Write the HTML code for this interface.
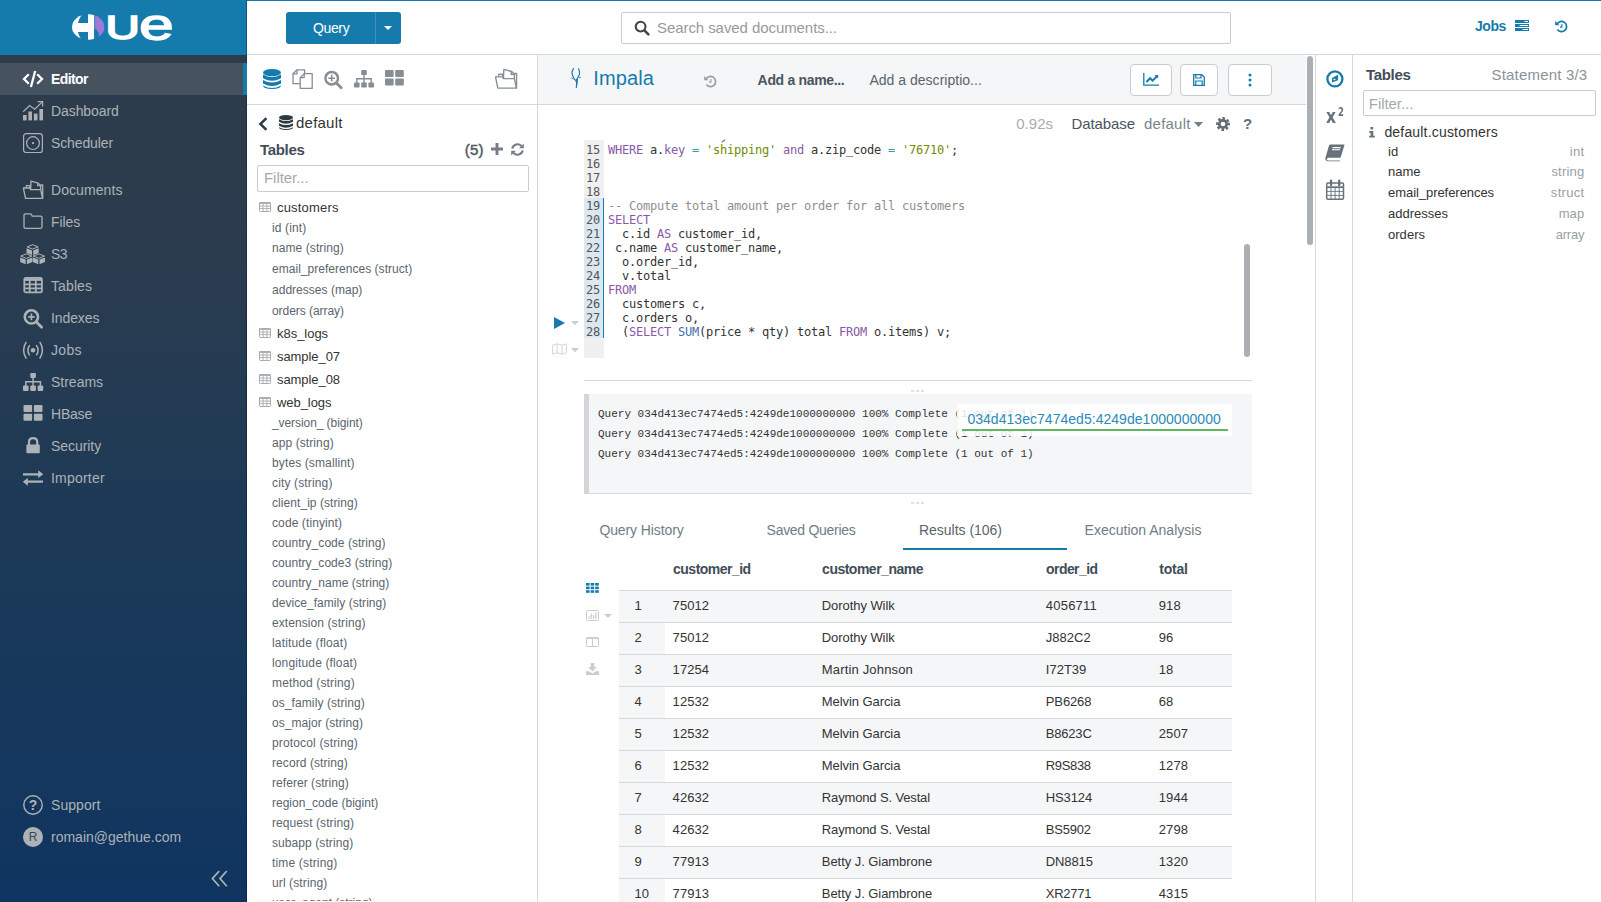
<!DOCTYPE html>
<html lang="en"><head>
<meta charset="utf-8">
<title>Hue - Editor</title>
<style>
*{box-sizing:border-box}
html,body{margin:0;padding:0}
body{width:1601px;height:902px;overflow:hidden;background:#fff;position:relative;font-family:"Liberation Sans",sans-serif;font-size:14px;color:#333;line-height:20px}
.abs{position:absolute}
.t{white-space:pre;display:inline-block}
svg{display:block;position:absolute;overflow:visible}
/* ---------- sidebar ---------- */
#sb{position:absolute;left:0;top:0;width:247px;height:902px;background:linear-gradient(180deg,#2e3c4a 0px,#2b3c4e 250px,#1d3a57 520px,#0f3560 902px)}
#sbh{position:absolute;left:0;top:0;width:247px;height:55px;background:#157bad}
.si{position:absolute;left:0;width:247px;height:32px;color:#adb2b6;font-size:14px;line-height:32px}
.si .t{position:absolute;left:51px;top:0}
.si.on{background:#465260;color:#fff;font-weight:bold;border-right:4px solid #157bad}
.si svg{left:22px;top:5px;width:22px;height:22px}
/* ---------- top nav ---------- */
#top{position:absolute;left:247px;top:0;width:1354px;height:55px;background:#fff;border-top:1px solid #157bad;border-bottom:1px solid #d6d8db}
/* ---------- left assist ---------- */
#la{position:absolute;left:247px;top:55px;width:291px;height:847px;background:#fff;border-right:1px solid #d6d8db;overflow:hidden}
.col{position:absolute;left:25px;font-size:12px;color:#5a656d;line-height:20px;height:20px}
.tb{position:absolute;left:30px;font-size:13px;color:#333;line-height:20px;height:20px}
/* ---------- main ---------- */
#main{position:absolute;left:538px;top:55px;width:777px;height:847px;background:#fff;overflow:hidden}
.cm{font-family:"DejaVu Sans Mono","Liberation Mono",monospace;font-size:12px;line-height:14px;height:14px;letter-spacing:-0.225px;white-space:pre}
.lg{font-family:"Liberation Mono",monospace;font-size:11px;line-height:20px;height:20px;color:#333;white-space:pre}
/* ---------- right ---------- */
#rs{position:absolute;left:1315px;top:55px;width:38px;height:847px;border-left:1px solid #d6d8db;border-right:1px solid #d6d8db;background:#fff}
#ra{position:absolute;left:1353px;top:55px;width:248px;height:847px;background:#fff}
</style>
</head>
<body>
<!-- ================= SIDEBAR ================= -->
<div id="sb">
<div id="sbh"></div><div class="abs" style="left:246px;top:0;width:1px;height:902px;background:rgba(0,22,56,0.4)"></div>
<svg style="left:0;top:0;width:247px;height:55px" viewBox="0 0 247 55">
 <defs><mask id="hm" maskUnits="userSpaceOnUse" x="60" y="5" width="60" height="45"><ellipse cx="88.2" cy="27" rx="16.2" ry="12.8" fill="#fff"></ellipse><path d="M83.6 12 L88 12 L88 22.9 L77.8 22.9 Q79.4 17.6 83.6 12 Z" fill="#000"></path><path d="M77.8 31.9 L88 31.9 L88 42 L83 42 Q79 36.5 77.8 31.9 Z" fill="#000"></path><path d="M94.3 28.6 Q98.4 30.4 98.8 34.6 Q98.9 37.6 97 41 L94.3 41 Z" fill="#000"></path><rect x="94.3" y="10" width="0.8" height="34" fill="#000"></rect></mask></defs>
 <g mask="url(#hm)">
  <rect x="70" y="10" width="24.7" height="34" fill="#fff"></rect>
  <rect x="94.7" y="10" width="12" height="34" fill="#9f79d8"></rect>
  <circle cx="97.3" cy="21.6" r="0.7" fill="#5f8fd0"></circle>
 </g>
 <text transform="translate(105.6,39.4) scale(1.42,1)" font-family="Liberation Sans, sans-serif" font-size="33.5" fill="#fff" stroke="#fff" stroke-width="1.6">U</text>
 <text transform="translate(139,39.7) scale(1.39,1)" font-family="Liberation Sans, sans-serif" font-size="45" fill="#fff" stroke="#fff" stroke-width="1.3">e</text>
</svg>
<div class="si on" style="top:63px"><svg viewBox="0 0 22 22" fill="none" stroke="#fff" stroke-width="2.3" stroke-linecap="butt" stroke-linejoin="miter"><path d="M6.8 6.2 L2 11 L6.8 15.8"></path><path d="M13.2 3 L8.9 19"></path><path d="M15.2 6.2 L20 11 L15.2 15.8"></path></svg><span class="t" style="letter-spacing: -0.589px;">Editor</span></div>
<div class="si" style="top:95px"><svg viewBox="0 0 22 22" fill="#adb2b6"><rect x="1" y="15" width="3.6" height="5.4"></rect><rect x="6.4" y="11.5" width="3.6" height="8.9"></rect><rect x="11.9" y="13.6" width="3.6" height="6.8"></rect><rect x="17.4" y="9" width="3.6" height="11.4"></rect><path d="M1.2 11.8 L7.6 5.6 L12.8 9.2 L20.3 1.9" fill="none" stroke="#adb2b6" stroke-width="1.2"></path><path d="M15.6 1.6 L20.7 1.5 L20.6 6.6" fill="none" stroke="#adb2b6" stroke-width="1.2"></path></svg><span class="t" style="letter-spacing: -0.087px;">Dashboard</span></div>
<div class="si" style="top:127px"><svg viewBox="0 0 22 22" fill="none" stroke="#adb2b6" stroke-width="1.2"><rect x="1.6" y="1.7" width="18.8" height="18.8" rx="2.6"></rect><circle cx="11" cy="11.1" r="6.4"></circle><circle cx="11" cy="11.1" r="1.2" fill="#adb2b6" stroke="none"></circle></svg><span class="t" style="letter-spacing: -0.12px;">Scheduler</span></div>

<div class="si" style="top:174px"><svg viewBox="0 0 22 22" fill="none" stroke="#adb2b6" stroke-width="1.3" stroke-linejoin="round"><path d="M1.4 9 L8 9 L8.5 10.7 L18.7 10.7 L20.5 19.4 L3.5 19.4 Z"></path><path d="M20.7 19.4 V6 H18.6"></path><path d="M4 8.8 L4.4 6.6 H7.6 L8 8.8"></path><path d="M8.7 10.4 L9 2.2 L16.2 4.1 L18.7 6.7 V10.4"></path><path d="M16.2 4.1 L15.6 6.6 L18.5 6.9"></path></svg><span class="t" style="letter-spacing: 0.073px;">Documents</span></div>
<div class="si" style="top:206px"><svg viewBox="0 0 22 22" fill="none" stroke="#adb2b6" stroke-width="1.3" stroke-linejoin="round"><path d="M3.4 2.9 L8.2 2.9 Q9.2 2.9 9.6 3.8 L10.2 5.2 L18.6 5.2 Q20 5.2 20 6.6 L20 15.8 Q20 17.3 18.6 17.3 L3.4 17.3 Q2 17.3 2 15.8 L2 4.4 Q2 2.9 3.4 2.9 Z"></path></svg><span class="t" style="letter-spacing: -0.072px;">Files</span></div>
<div class="si" style="top:238px"><svg viewBox="0 0 22 22" fill="#adb2b6"><defs><g id="cube"><path d="M0.5 2.7 L6.1 0.5 L11.7 2.7 L6.1 4.9 Z" fill="none" stroke="#adb2b6" stroke-width="1"></path><path d="M0 4 L5.5 6.2 V10.9 L0 8.7 Z"></path><path d="M6.7 6.2 L12.2 4 V8.7 L6.7 10.9 Z"></path></g></defs><use href="#cube" x="4.5" y="1.2"></use><use href="#cube" x="-1.8" y="10.4"></use><use href="#cube" x="10.8" y="10.4"></use></svg><span class="t" style="letter-spacing: -0.469px;">S3</span></div>
<div class="si" style="top:270px"><svg viewBox="0 0 22 22" fill="none" stroke="#adb2b6"><rect x="2.3" y="2.9" width="17.6" height="14.4" rx="1.6" stroke-width="1.8"></rect><path d="M2 4.6 H20" stroke-width="2.6"></path><path d="M2 9.4 H20 M2 13.3 H20 M7.7 4 V17 M13.8 4 V17" stroke-width="1.8"></path></svg><span class="t" style="letter-spacing: 0.109px;">Tables</span></div>
<div class="si" style="top:302px"><svg viewBox="0 0 22 22" fill="none" stroke="#adb2b6"><circle cx="9.4" cy="9.9" r="6.6" stroke-width="2.6"></circle><path d="M14.4 15 L19.6 20.2" stroke-width="2.8" stroke-linecap="round"></path><path d="M9.4 6.6 V13.2 M6.1 9.9 H12.7" stroke-width="1.7"></path></svg><span class="t" style="letter-spacing: -0.103px;">Indexes</span></div>
<div class="si" style="top:334px"><svg viewBox="0 0 22 22" fill="none" stroke="#adb2b6" stroke-width="1.5" stroke-linecap="round"><circle cx="11" cy="11.2" r="2.3" fill="#adb2b6" stroke="none"></circle><path d="M7.4 6.6 Q4.4 11.2 7.4 15.8"></path><path d="M14.6 6.6 Q17.6 11.2 14.6 15.8"></path><path d="M4 3.4 Q-0.8 11.2 4 19"></path><path d="M18 3.4 Q22.8 11.2 18 19"></path></svg><span class="t" style="letter-spacing: 0.305px;">Jobs</span></div>
<div class="si" style="top:366px"><svg viewBox="0 0 22 22" fill="#adb2b6"><rect x="8.3" y="1.9" width="5.6" height="5" rx="0.8"></rect><rect x="1" y="14.6" width="5.6" height="5.3" rx="0.8"></rect><rect x="8.3" y="14.6" width="5.6" height="5.3" rx="0.8"></rect><rect x="15.6" y="14.6" width="5.6" height="5.3" rx="0.8"></rect><path d="M11.1 6.5 V15 M3.8 15 V10.8 H18.4 V15" fill="none" stroke="#adb2b6" stroke-width="1.5"></path></svg><span class="t" style="letter-spacing: -0.009px;">Streams</span></div>
<div class="si" style="top:398px"><svg viewBox="0 0 22 22" fill="#adb2b6"><rect x="1.5" y="2" width="8.6" height="7" rx="1"></rect><rect x="11.9" y="2" width="8.6" height="7" rx="1"></rect><rect x="1.5" y="10.8" width="8.6" height="7" rx="1"></rect><rect x="11.9" y="10.8" width="8.6" height="7" rx="1"></rect></svg><span class="t" style="letter-spacing: -0.209px;">HBase</span></div>
<div class="si" style="top:430px"><svg viewBox="0 0 22 22" fill="#adb2b6"><rect x="4.4" y="9.4" width="13.4" height="8.8" rx="1"></rect><path d="M7 10 V7 Q7 3.1 11.1 3.1 Q15.2 3.1 15.2 7 V10" fill="none" stroke="#adb2b6" stroke-width="2.2"></path></svg><span class="t" style="letter-spacing: -0.055px;">Security</span></div>
<div class="si" style="top:462px"><svg viewBox="0 0 22 22" fill="#adb2b6"><path d="M1 6.2 H16.2 V3.2 L21.2 7.2 L16.2 11 V8.4 H1 Z"></path><path d="M21 13.6 H5.8 V11 L0.8 14.8 L5.8 18.8 V15.8 H21 Z"></path></svg><span class="t" style="letter-spacing: 0.205px;">Importer</span></div>

<div class="si" style="top:789px"><svg viewBox="0 0 22 22" fill="none" stroke="#adb2b6" stroke-width="1.4"><circle cx="11" cy="11" r="9.2"></circle></svg><span class="abs" style="left:22px;top:0;width:22px;text-align:center;font-weight:bold;font-size:14px">?</span><span class="t" style="letter-spacing: 0.051px;">Support</span></div>
<div class="si" style="top:821px"><div class="abs" style="left:23px;top:6px;width:20px;height:20px;border-radius:10px;background:#adb2b6"></div><span class="abs" style="left:23px;top:0;width:20px;text-align:center;font-size:12px;color:#3b4a5a">R</span><span class="t" style="letter-spacing: 0.002px;">romain@gethue.com</span></div>
<svg style="left:211px;top:870px;width:17px;height:17px" viewBox="0 0 17 17" fill="none" stroke="#adb2b6" stroke-width="1.7"><path d="M8.2 1 L1.4 8.6 L8.2 16.2"></path><path d="M15.8 1 L9 8.6 L15.8 16.2"></path></svg>

</div>
<!-- ================= TOP NAV ================= -->
<div id="top">
<!--TOP0-->
<div class="abs" style="left:39px;top:11px;width:115px;height:32px;background:#157bad;border-radius:3px"></div>
<div class="abs" style="left:128px;top:11px;width:1px;height:32px;background:#3f91ba"></div>
<span class="t abs" style="left: 66px; top: 16px; color: rgb(255, 255, 255); font-size: 14px; line-height: 22px; letter-spacing: -0.372px;">Query</span>
<svg style="left:137px;top:25px;width:8px;height:4px" viewBox="0 0 8 4"><path d="M0 0 H8 L4 4 Z" fill="#fff"></path></svg>
<div class="abs" style="left:374px;top:11px;width:610px;height:32px;border:1px solid #ccc;border-radius:2px;background:#fff"></div>
<svg style="left:387px;top:19px;width:16px;height:16px" viewBox="0 0 16 16" fill="none" stroke="#444"><circle cx="6.6" cy="6.6" r="4.9" stroke-width="2.1"></circle><path d="M10.4 10.4 L14.4 14.4" stroke-width="2.6" stroke-linecap="round"></path></svg>
<span class="t abs" style="left: 410px; top: 16px; color: rgb(153, 153, 153); font-size: 15px; line-height: 22px; letter-spacing: -0.073px;">Search saved documents...</span>
<span class="t abs" style="left: 1228px; top: 14px; color: rgb(21, 123, 173); font-size: 14px; font-weight: bold; line-height: 22px; letter-spacing: -0.473px;">Jobs</span>
<svg style="left:1268px;top:19px;width:14px;height:11px" viewBox="0 0 14 11"><path d="M0 0H14V3H0Z M0 4H14V7H0Z M0 8H14V11H0Z" fill="#157bad"></path><path d="M9.6 1h3.4v1h-3.4z M4.6 5h8.4v1h-8.4z M7.6 9h5.4v1h-5.4z" fill="#fff"></path></svg>
<svg style="left:1308px;top:19px;width:13px;height:13px" viewBox="0 0 13 13" fill="none" stroke="#157bad"><path d="M1.9 4.4 A5.1 5.1 0 1 1 2.4 9.6" stroke-width="1.7"></path><path d="M0.2 1 V5.2 H4.4 Z" fill="#157bad" stroke="none"></path><path d="M6.9 3.9 V7.1 H5" stroke-width="1.1"></path></svg>
<!--TOP1-->
</div>
<!-- ================= LEFT ASSIST ================= -->
<div id="la">
<!--LA0-->
<svg style="left:16px;top:14px;width:18px;height:20px" viewBox="0 0 18 20" fill="#157bad"><ellipse cx="9" cy="3.6" rx="9" ry="3.6"></ellipse><path d="M0 5.6 Q9 10.6 18 5.6 V9.2 Q9 14.2 0 9.2 Z"></path><path d="M0 11 Q9 16 18 11 V14.6 Q9 19.6 0 14.6 Z"></path><path d="M0 16.4 Q9 21.4 18 16.4 V16.6 Q18 20 9 20 Q0 20 0 16.6 Z"></path></svg>
<svg style="left:45px;top:14px;width:21px;height:20px" viewBox="0 0 21 20" fill="none" stroke="#868d95" stroke-width="1.3" stroke-linejoin="round"><path d="M8.2 14.6 H1 V4.8 L5 0.8 H12.6 V4.4"></path><path d="M5 0.8 V4.8 H1"></path><path d="M12.2 4.6 H20.2 V19.4 H8.2 V8.6 Z"></path><path d="M12.2 4.6 V8.6 H8.2"></path></svg>
<svg style="left:77px;top:15px;width:19px;height:19px" viewBox="0 0 19 19" fill="none" stroke="#868d95"><circle cx="7.7" cy="8.2" r="6.3" stroke-width="2.5"></circle><path d="M12.6 13.2 L17.2 17.8" stroke-width="2.7" stroke-linecap="round"></path><path d="M7.7 4.8 V11.6 M4.3 8.2 H11.1" stroke-width="1.6"></path></svg>
<svg style="left:107px;top:15px;width:20px;height:18px" viewBox="0 0 20 18" fill="#868d95"><rect x="7.2" y="0" width="5.6" height="5" rx="0.8"></rect><rect x="0" y="12.4" width="5.6" height="5.2" rx="0.8"></rect><rect x="7.2" y="12.4" width="5.6" height="5.2" rx="0.8"></rect><rect x="14.4" y="12.4" width="5.6" height="5.2" rx="0.8"></rect><path d="M10 4.6 V13 M2.8 13 V8.8 H17.2 V13" fill="none" stroke="#868d95" stroke-width="1.4"></path></svg>
<svg style="left:138px;top:15px;width:19px;height:16px" viewBox="0 0 19 16" fill="#868d95"><rect x="0" y="0" width="8.6" height="7" rx="1"></rect><rect x="10.2" y="0" width="8.6" height="7" rx="1"></rect><rect x="0" y="8.6" width="8.6" height="7" rx="1"></rect><rect x="10.2" y="8.6" width="8.6" height="7" rx="1"></rect></svg>
<svg style="left:246.6px;top:11.6px;width:24px;height:24px" viewBox="0 0 22 22" fill="none" stroke="#868d95" stroke-width="1.25" stroke-linejoin="round"><path d="M1.4 9 L8 9 L8.5 10.7 L18.7 10.7 L20.5 19.4 L3.5 19.4 Z"></path><path d="M20.7 19.4 V6 H18.6"></path><path d="M4 8.8 L4.4 6.6 H7.6 L8 8.8"></path><path d="M8.7 10.4 L9 2.2 L16.2 4.1 L18.7 6.7 V10.4"></path><path d="M16.2 4.1 L15.6 6.6 L18.5 6.9"></path></svg>
<div class="abs" style="left:0;top:49px;width:290px;height:1px;background:#d6d8db"></div>
<svg style="left:11px;top:62px;width:10px;height:14px" viewBox="0 0 10 14" fill="none" stroke="#2d3a44" stroke-width="2.5"><path d="M8.4 1.2 L2.4 7 L8.4 12.8"></path></svg>
<svg style="left:32px;top:60px;width:14px;height:15px" viewBox="0 0 14 15" fill="#2d3a44"><ellipse cx="7" cy="2.6" rx="7" ry="2.6"></ellipse><path d="M0 4.2 Q7 8 14 4.2 V6.8 Q7 10.6 0 6.8 Z"></path><path d="M0 8.2 Q7 12 14 8.2 V10.8 Q7 14.6 0 10.8 Z"></path><path d="M0 12.2 Q7 16 14 12.2 V12.6 Q14 15 7 15 Q0 15 0 12.6 Z"></path></svg>
<span class="t abs" style="left: 49px; top: 57.5px; font-size: 15px; line-height: 20px; color: rgb(51, 51, 51); letter-spacing: 0.225px;">default</span>
<span class="t abs" style="left: 13px; top: 84.5px; font-size: 15px; line-height: 20px; color: rgb(67, 77, 87); font-weight: bold; letter-spacing: -0.328px;">Tables</span>
<span class="t abs" style="left: 217.8px; top: 84.5px; font-size: 15px; line-height: 20px; color: rgb(79, 90, 99); -webkit-text-stroke: 0.45px rgb(79, 90, 99); letter-spacing: 0.151px;">(5)</span>
<svg style="left:244px;top:87.9px;width:12px;height:12px" viewBox="0 0 12 12" stroke="#757e86" stroke-width="2.9" fill="none"><path d="M6 0 V12 M0 6 H12"></path></svg>
<svg style="left:264px;top:87.6px;width:13px;height:13px" viewBox="0 0 13 13" fill="none" stroke="#757e86" stroke-width="2.2"><path d="M1.3 5.6 A5.3 5.3 0 0 1 10.4 3"></path><path d="M11.7 7.4 A5.3 5.3 0 0 1 2.6 10"></path><path d="M12.8 0.4 V5.2 H8 Z M0.2 12.6 V7.8 H5 Z" fill="#757e86" stroke="none"></path></svg>
<div class="abs" style="left:10px;top:110px;width:272px;height:27px;border:1px solid #ccc;border-radius:2px"></div>
<span class="t abs" style="left: 17px; top: 112.5px; font-size: 15px; line-height: 20px; color: rgb(164, 169, 173); letter-spacing: -0.057px;">Filter...</span>
<svg style="left:12.4px;top:147.0px;width:12px;height:10px" viewBox="0 0 12 10" fill="none" stroke="#a7acb1"><rect x="0.5" y="0.5" width="11" height="9" rx="0.8" stroke-width="1"></rect><path d="M0 1.2 H12" stroke-width="1.4"></path><path d="M0 4.1 H12 M0 6.6 H12 M4.1 1 V10 M7.9 1 V10" stroke-width="0.9"></path></svg>
<span class="t abs" style="left: 30px; top: 142.5px; font-size: 13px; line-height: 20px; color: rgb(51, 51, 51); letter-spacing: 0.186px;">customers</span>
<span class="t abs" style="left: 25px; top: 163px; font-size: 12px; line-height: 20px; color: rgb(90, 101, 109); letter-spacing: 0.135px;">id (int)</span>
<span class="t abs" style="left: 25px; top: 183px; font-size: 12px; line-height: 20px; color: rgb(90, 101, 109); letter-spacing: 0.084px;">name (string)</span>
<span class="t abs" style="left: 25px; top: 204px; font-size: 12px; line-height: 20px; color: rgb(90, 101, 109); letter-spacing: 0.03px;">email_preferences (struct)</span>
<span class="t abs" style="left: 25px; top: 225px; font-size: 12px; line-height: 20px; color: rgb(90, 101, 109); letter-spacing: 0.022px;">addresses (map)</span>
<span class="t abs" style="left: 25px; top: 246px; font-size: 12px; line-height: 20px; color: rgb(90, 101, 109); letter-spacing: -0.049px;">orders (array)</span>
<svg style="left:12.4px;top:273.4px;width:12px;height:10px" viewBox="0 0 12 10" fill="none" stroke="#a7acb1"><rect x="0.5" y="0.5" width="11" height="9" rx="0.8" stroke-width="1"></rect><path d="M0 1.2 H12" stroke-width="1.4"></path><path d="M0 4.1 H12 M0 6.6 H12 M4.1 1 V10 M7.9 1 V10" stroke-width="0.9"></path></svg>
<span class="t abs" style="left: 30px; top: 268.5px; font-size: 13px; line-height: 20px; color: rgb(51, 51, 51); letter-spacing: -0.031px;">k8s_logs</span>
<svg style="left:12.4px;top:296.4px;width:12px;height:10px" viewBox="0 0 12 10" fill="none" stroke="#a7acb1"><rect x="0.5" y="0.5" width="11" height="9" rx="0.8" stroke-width="1"></rect><path d="M0 1.2 H12" stroke-width="1.4"></path><path d="M0 4.1 H12 M0 6.6 H12 M4.1 1 V10 M7.9 1 V10" stroke-width="0.9"></path></svg>
<span class="t abs" style="left: 30px; top: 291.5px; font-size: 13px; line-height: 20px; color: rgb(51, 51, 51); letter-spacing: -0.066px;">sample_07</span>
<svg style="left:12.4px;top:319.4px;width:12px;height:10px" viewBox="0 0 12 10" fill="none" stroke="#a7acb1"><rect x="0.5" y="0.5" width="11" height="9" rx="0.8" stroke-width="1"></rect><path d="M0 1.2 H12" stroke-width="1.4"></path><path d="M0 4.1 H12 M0 6.6 H12 M4.1 1 V10 M7.9 1 V10" stroke-width="0.9"></path></svg>
<span class="t abs" style="left: 30px; top: 314.5px; font-size: 13px; line-height: 20px; color: rgb(51, 51, 51); letter-spacing: -0.066px;">sample_08</span>
<svg style="left:12.4px;top:342.4px;width:12px;height:10px" viewBox="0 0 12 10" fill="none" stroke="#a7acb1"><rect x="0.5" y="0.5" width="11" height="9" rx="0.8" stroke-width="1"></rect><path d="M0 1.2 H12" stroke-width="1.4"></path><path d="M0 4.1 H12 M0 6.6 H12 M4.1 1 V10 M7.9 1 V10" stroke-width="0.9"></path></svg>
<span class="t abs" style="left: 30px; top: 337.5px; font-size: 13px; line-height: 20px; color: rgb(51, 51, 51); letter-spacing: -0.064px;">web_logs</span>
<span class="t abs" style="left: 25px; top: 358px; font-size: 12px; line-height: 20px; color: rgb(90, 101, 109); letter-spacing: -0.075px;">_version_ (bigint)</span>
<span class="t abs" style="left: 25px; top: 378px; font-size: 12px; line-height: 20px; color: rgb(90, 101, 109); letter-spacing: 0.086px;">app (string)</span>
<span class="t abs" style="left: 25px; top: 398px; font-size: 12px; line-height: 20px; color: rgb(90, 101, 109); letter-spacing: 0.123px;">bytes (smallint)</span>
<span class="t abs" style="left: 25px; top: 418px; font-size: 12px; line-height: 20px; color: rgb(90, 101, 109); letter-spacing: 0.144px;">city (string)</span>
<span class="t abs" style="left: 25px; top: 438px; font-size: 12px; line-height: 20px; color: rgb(90, 101, 109); letter-spacing: 0.063px;">client_ip (string)</span>
<span class="t abs" style="left: 25px; top: 458px; font-size: 12px; line-height: 20px; color: rgb(90, 101, 109); letter-spacing: 0.103px;">code (tinyint)</span>
<span class="t abs" style="left: 25px; top: 478px; font-size: 12px; line-height: 20px; color: rgb(90, 101, 109); letter-spacing: 0.039px;">country_code (string)</span>
<span class="t abs" style="left: 25px; top: 498px; font-size: 12px; line-height: 20px; color: rgb(90, 101, 109); letter-spacing: 0.041px;">country_code3 (string)</span>
<span class="t abs" style="left: 25px; top: 518px; font-size: 12px; line-height: 20px; color: rgb(90, 101, 109); letter-spacing: 0.029px;">country_name (string)</span>
<span class="t abs" style="left: 25px; top: 538px; font-size: 12px; line-height: 20px; color: rgb(90, 101, 109); letter-spacing: 0.043px;">device_family (string)</span>
<span class="t abs" style="left: 25px; top: 558px; font-size: 12px; line-height: 20px; color: rgb(90, 101, 109); letter-spacing: 0.083px;">extension (string)</span>
<span class="t abs" style="left: 25px; top: 578px; font-size: 12px; line-height: 20px; color: rgb(90, 101, 109); letter-spacing: 0.165px;">latitude (float)</span>
<span class="t abs" style="left: 25px; top: 598px; font-size: 12px; line-height: 20px; color: rgb(90, 101, 109); letter-spacing: 0.14px;">longitude (float)</span>
<span class="t abs" style="left: 25px; top: 618px; font-size: 12px; line-height: 20px; color: rgb(90, 101, 109); letter-spacing: 0.138px;">method (string)</span>
<span class="t abs" style="left: 25px; top: 638px; font-size: 12px; line-height: 20px; color: rgb(90, 101, 109); letter-spacing: 0.087px;">os_family (string)</span>
<span class="t abs" style="left: 25px; top: 658px; font-size: 12px; line-height: 20px; color: rgb(90, 101, 109); letter-spacing: 0.058px;">os_major (string)</span>
<span class="t abs" style="left: 25px; top: 678px; font-size: 12px; line-height: 20px; color: rgb(90, 101, 109); letter-spacing: 0.153px;">protocol (string)</span>
<span class="t abs" style="left: 25px; top: 698px; font-size: 12px; line-height: 20px; color: rgb(90, 101, 109); letter-spacing: 0.081px;">record (string)</span>
<span class="t abs" style="left: 25px; top: 718px; font-size: 12px; line-height: 20px; color: rgb(90, 101, 109); letter-spacing: 0.051px;">referer (string)</span>
<span class="t abs" style="left: 25px; top: 738px; font-size: 12px; line-height: 20px; color: rgb(90, 101, 109); letter-spacing: 0.009px;">region_code (bigint)</span>
<span class="t abs" style="left: 25px; top: 758px; font-size: 12px; line-height: 20px; color: rgb(90, 101, 109); letter-spacing: 0.079px;">request (string)</span>
<span class="t abs" style="left: 25px; top: 778px; font-size: 12px; line-height: 20px; color: rgb(90, 101, 109); letter-spacing: 0.082px;">subapp (string)</span>
<span class="t abs" style="left: 25px; top: 798px; font-size: 12px; line-height: 20px; color: rgb(90, 101, 109); letter-spacing: 0.163px;">time (string)</span>
<span class="t abs" style="left: 25px; top: 818px; font-size: 12px; line-height: 20px; color: rgb(90, 101, 109); letter-spacing: 0.111px;">url (string)</span>
<span class="t abs" style="left: 25px; top: 838px; font-size: 12px; line-height: 20px; color: rgb(90, 101, 109); letter-spacing: -0.007px;">user_agent (string)</span>
<div class="abs" style="left:0;top:846px;width:290px;height:1px;background:#fff"></div>
<!--LA1-->
</div>
<!-- ================= MAIN ================= -->
<div id="main">
<!--MAIN0-->
<div class="abs" style="left:0px;top:0px;width:768px;height:49px;background:#f5f6f7"></div>
<div class="abs" style="left:0px;top:49px;width:768px;height:1px;background:#d6d8db"></div>
<div class="abs" style="left:769.2px;top:1.2px;width:5.7px;height:189px;background:#abafb4;border-radius:3px"></div>
<svg style="left:32px;top:13px;width:12px;height:21px" viewBox="0 0 12 21" fill="none" stroke="#157bad" stroke-linecap="round"><path d="M3.4 0.6 Q1.4 4 2.2 6.5 Q3.4 9 4.7 11.8 M8.6 0.8 Q10 4 9.4 6.5 Q8.4 8.6 7 11" stroke-width="1.15"></path><path d="M5 11.8 L8 10.2 L7.7 15 L6.7 20.2 L5.7 19.8 L6.1 15 Z" fill="#157bad" stroke="none"></path><path d="M1.6 10 L3 11 M9.2 9.8 L10.6 9.2" stroke-width="0.9"></path></svg>
<span class="t abs" style="left: 55.2px; top: 9px; font-size: 20px; line-height: 28px; color: rgb(21, 123, 173); letter-spacing: 0.135px;">Impala</span>
<svg style="left:166px;top:20px;width:13px;height:13px" viewBox="0 0 13 13" fill="none" stroke="#999fa5"><path d="M1.9 4.4 A5.1 5.1 0 1 1 2.4 9.6" stroke-width="1.7"></path><path d="M0.2 1 V5.2 H4.4 Z" fill="#999fa5" stroke="none"></path><path d="M6.9 3.9 V7.1 H5" stroke-width="1.1"></path></svg>
<span class="t abs" style="left: 219.6px; top: 15px; font-size: 14px; line-height: 20px; color: rgb(74, 85, 96); font-weight: bold; letter-spacing: -0.322px;">Add a name...</span>
<span class="t abs" style="left: 331.4px; top: 15px; font-size: 14px; line-height: 20px; color: rgb(90, 101, 109); letter-spacing: 0.019px;">Add a descriptio...</span>
<div class="abs" style="left:592px;top:9px;width:42px;height:32px;background:#fff;border:1px solid #ccc;border-radius:4px"></div>
<div class="abs" style="left:642px;top:9px;width:38px;height:32px;background:#fff;border:1px solid #ccc;border-radius:4px"></div>
<div class="abs" style="left:690px;top:9px;width:44px;height:32px;background:#fff;border:1px solid #ccc;border-radius:4px"></div>
<svg style="left:605px;top:18px;width:16px;height:13px" viewBox="0 0 16 13" fill="none" stroke="#157bad"><path d="M0.8 0 V12.2 H16" stroke-width="1.3"></path><path d="M3.4 9 L7.2 5.2 L9.6 7.6 L14.2 3" stroke-width="2"></path><path d="M11.6 2 H15.2 V5.6 Z" fill="#157bad" stroke="none"></path></svg>
<svg style="left:655px;top:19px;width:12px;height:12px" viewBox="0 0 12 12" fill="none" stroke="#157bad"><path d="M0.7 0.7 H8.8 L11.3 3.2 V11.3 H0.7 Z" stroke-width="1.3"></path><path d="M2.8 0.8 V4 H8 V0.8" stroke-width="1.2"></path><path d="M2.8 11.2 V7 H9.2 V11.2" stroke-width="1.2"></path></svg>
<svg style="left:710px;top:18px;width:4px;height:14px" viewBox="0 0 4 14" fill="#157bad"><circle cx="2" cy="2" r="1.5"></circle><circle cx="2" cy="7" r="1.5"></circle><circle cx="2" cy="12" r="1.5"></circle></svg>
<span class="t abs" style="left: 478.2px; top: 58.5px; font-size: 15px; line-height: 20px; color: rgb(169, 172, 175); letter-spacing: 0.059px;">0.92s</span>
<span class="t abs" style="left: 533.6px; top: 58.5px; font-size: 15px; line-height: 20px; color: rgb(74, 85, 96); letter-spacing: -0.107px;">Database</span>
<span class="t abs" style="left: 606px; top: 58.5px; font-size: 15px; line-height: 20px; color: rgb(123, 133, 141); letter-spacing: 0.225px;">default</span>
<svg style="left:656px;top:67px;width:9px;height:5px" viewBox="0 0 9 5" fill="#737d85"><path d="M0 0 H9 L4.5 5 Z"></path></svg>
<svg style="left:678px;top:62px;width:14px;height:14px" viewBox="0 0 14 14" stroke="#636d75" fill="none"><circle cx="7" cy="7" r="3.7" stroke-width="2.7"></circle><circle cx="7" cy="7" r="5.8" stroke-width="2.4" stroke-dasharray="2.55 2.005" transform="rotate(-12.6 7 7)"></circle></svg>
<span class="t abs" style="left: 705px; top: 58.5px; font-size: 15px; line-height: 20px; color: rgb(99, 109, 117); font-weight: bold; letter-spacing: -1.703px;">?</span>
<div class="abs" style="left:46px;top:85px;width:20px;height:218px;background:#f0f0f0"></div>
<div class="abs" style="left:46px;top:143px;width:20px;height:140px;background:#dce8f1"></div>
<svg style="left:183px;top:84px;width:5px;height:4px" viewBox="0 0 5 4"><path d="M0.8 3.2 L4 0.8" stroke="#7d6f9a" stroke-width="1.1"></path></svg>
<div class="abs" style="left:65px;top:143px;width:1.3px;height:140px;background:#157bad"></div>
<span class="abs cm" style="left:48px;top:88px;width:14px;color:#555">15</span>
<span class="abs cm" style="left:70px;top:88px;color:#333"><span style="color:#8959a8">WHERE</span> a.<span style="color:#8959a8">key</span> <span style="color:#3e999f">=</span> <span style="color:#718c00">'shipping'</span> <span style="color:#8959a8">and</span> a.zip_code <span style="color:#3e999f">=</span> <span style="color:#718c00">'76710'</span>;</span>
<span class="abs cm" style="left:48px;top:102px;width:14px;color:#555">16</span>
<span class="abs cm" style="left:48px;top:116px;width:14px;color:#555">17</span>
<span class="abs cm" style="left:48px;top:130px;width:14px;color:#555">18</span>
<span class="abs cm" style="left:48px;top:144px;width:14px;color:#555">19</span>
<span class="abs cm" style="left:70px;top:144px;color:#333"><span style="color:#8e908c">-- Compute total amount per order for all customers</span></span>
<span class="abs cm" style="left:48px;top:158px;width:14px;color:#555">20</span>
<span class="abs cm" style="left:70px;top:158px;color:#333"><span style="color:#8959a8">SELECT</span></span>
<span class="abs cm" style="left:48px;top:172px;width:14px;color:#555">21</span>
<span class="abs cm" style="left:70px;top:172px;color:#333">  c.id <span style="color:#8959a8">AS</span> customer_id,</span>
<span class="abs cm" style="left:48px;top:186px;width:14px;color:#555">22</span>
<span class="abs cm" style="left:70px;top:186px;color:#333"> c.name <span style="color:#8959a8">AS</span> customer_name,</span>
<span class="abs cm" style="left:48px;top:200px;width:14px;color:#555">23</span>
<span class="abs cm" style="left:70px;top:200px;color:#333">  o.order_id,</span>
<span class="abs cm" style="left:48px;top:214px;width:14px;color:#555">24</span>
<span class="abs cm" style="left:70px;top:214px;color:#333">  v.total</span>
<span class="abs cm" style="left:48px;top:228px;width:14px;color:#555">25</span>
<span class="abs cm" style="left:70px;top:228px;color:#333"><span style="color:#8959a8">FROM</span></span>
<span class="abs cm" style="left:48px;top:242px;width:14px;color:#555">26</span>
<span class="abs cm" style="left:70px;top:242px;color:#333">  customers c,</span>
<span class="abs cm" style="left:48px;top:256px;width:14px;color:#555">27</span>
<span class="abs cm" style="left:70px;top:256px;color:#333">  c.orders o,</span>
<span class="abs cm" style="left:48px;top:270px;width:14px;color:#555">28</span>
<span class="abs cm" style="left:70px;top:270px;color:#333">  (<span style="color:#8959a8">SELECT</span> <span style="color:#4271ae">SUM</span>(price * qty) total <span style="color:#8959a8">FROM</span> o.items) v;</span>
<svg style="left:16px;top:261.5px;width:11px;height:12px" viewBox="0 0 11 12" fill="#157bad"><path d="M0 0 L11 6 L0 12 Z"></path></svg>
<svg style="left:33px;top:266px;width:8px;height:4.2px" viewBox="0 0 8 4.2" fill="#c5ced4"><path d="M0 0 H8 L4 4.2 Z"></path></svg>
<svg style="left:14px;top:288px;width:15px;height:12px" viewBox="0 0 15 12" fill="none" stroke="#d0d5da" stroke-width="1"><path d="M0.6 2.2 L5 0.8 L10 2.2 L14.4 0.8 V9.8 L10 11.2 L5 9.8 L0.6 11.2 Z M5 0.8 V9.8 M10 2.2 V11.2"></path></svg>
<svg style="left:33px;top:292.6px;width:8px;height:4.2px" viewBox="0 0 8 4.2" fill="#c5ced4"><path d="M0 0 H8 L4 4.2 Z"></path></svg>
<div class="abs" style="left:706.2px;top:188.5px;width:5.8px;height:113.8px;background:#abafb4;border-radius:3px"></div>
<div class="abs" style="left:46px;top:325px;width:668px;height:1px;background:#d6d8db"></div>
<div class="abs" style="left:373px;top:334.5px;width:13px;height:2px;background:repeating-linear-gradient(90deg,#dfe2e5 0,#dfe2e5 3px,transparent 3px,transparent 5px)"></div>
<div class="abs" style="left:46px;top:339px;width:668px;height:100px;background:#f5f6f7;border-left:5px solid #d3d5d9;border-bottom:1px solid #d6d8db"></div>
<span class="abs lg" style="left:60px;top:349px">Query 034d413ec7474ed5:4249de1000000000 100% Complete (1 out of 1)</span>
<span class="abs lg" style="left:60px;top:369px">Query 034d413ec7474ed5:4249de1000000000 100% Complete (1 out of 1)</span>
<span class="abs lg" style="left:60px;top:389px">Query 034d413ec7474ed5:4249de1000000000 100% Complete (1 out of 1)</span>
<div class="abs" style="left:419px;top:349px;width:275px;height:32px;background:rgba(255,255,255,0.86)"></div>
<span class="t abs" style="left: 429.4px; top: 354px; font-size: 14px; line-height: 20px; color: rgb(43, 139, 184); letter-spacing: 0.034px;">034d413ec7474ed5:4249de1000000000</span>
<div class="abs" style="left:424px;top:374px;width:265.5px;height:2px;background:#5fb760"></div>
<div class="abs" style="left:373px;top:447px;width:13px;height:2px;background:repeating-linear-gradient(90deg,#dfe2e5 0,#dfe2e5 3px,transparent 3px,transparent 5px)"></div>
<span class="t abs" style="left: 61.4px; top: 465px; font-size: 14px; line-height: 20px; color: rgb(112, 124, 134); letter-spacing: -0.1px;">Query History</span>
<span class="t abs" style="left: 228.6px; top: 465px; font-size: 14px; line-height: 20px; color: rgb(112, 124, 134); letter-spacing: -0.286px;">Saved Queries</span>
<span class="t abs" style="left: 381px; top: 465px; font-size: 14px; line-height: 20px; color: rgb(90, 101, 109); letter-spacing: -0.024px;">Results (106)</span>
<span class="t abs" style="left: 546.6px; top: 465px; font-size: 14px; line-height: 20px; color: rgb(112, 124, 134); letter-spacing: 0.003px;">Execution Analysis</span>
<div class="abs" style="left:365px;top:493px;width:164px;height:2px;background:#157bad"></div>
<span class="t abs" style="left: 135.1px; top: 504px; font-size: 14px; line-height: 20px; color: rgb(67, 77, 87); font-weight: bold; letter-spacing: -0.53px;">customer_id</span>
<span class="t abs" style="left: 284.1px; top: 504px; font-size: 14px; line-height: 20px; color: rgb(67, 77, 87); font-weight: bold; letter-spacing: -0.502px;">customer_name</span>
<span class="t abs" style="left: 508.1px; top: 504px; font-size: 14px; line-height: 20px; color: rgb(67, 77, 87); font-weight: bold; letter-spacing: -0.59px;">order_id</span>
<span class="t abs" style="left: 621.3px; top: 504px; font-size: 14px; line-height: 20px; color: rgb(67, 77, 87); font-weight: bold; letter-spacing: -0.231px;">total</span>
<div class="abs" style="left:81px;top:535px;width:613px;height:1px;background:#d6d8db"></div>
<div class="abs" style="left:81px;top:536px;width:613px;height:31px;background:#f5f6f7"></div>
<div class="abs" style="left:81px;top:567px;width:613px;height:1px;background:#d6d8db"></div>
<span class="t abs" style="left: 96.4px; top: 540.5px; font-size: 13px; line-height: 20px; color: rgb(51, 51, 51); letter-spacing: 0.078px;">1</span>
<span class="t abs" style="left: 134.6px; top: 540.5px; font-size: 13px; line-height: 20px; color: rgb(51, 51, 51); letter-spacing: 0.075px;">75012</span>
<span class="t abs" style="left: 283.8px; top: 540.5px; font-size: 13px; line-height: 20px; color: rgb(51, 51, 51); letter-spacing: -0.068px;">Dorothy Wilk</span>
<span class="t abs" style="left: 507.8px; top: 540.5px; font-size: 13px; line-height: 20px; color: rgb(51, 51, 51); letter-spacing: 0.214px;">4056711</span>
<span class="t abs" style="left: 620.8px; top: 540.5px; font-size: 13px; line-height: 20px; color: rgb(51, 51, 51); letter-spacing: 0.073px;">918</span>
<div class="abs" style="left:81px;top:568px;width:46px;height:31px;background:#f5f6f7"></div>
<div class="abs" style="left:81px;top:599px;width:613px;height:1px;background:#d6d8db"></div>
<span class="t abs" style="left: 96.4px; top: 572.5px; font-size: 13px; line-height: 20px; color: rgb(51, 51, 51); letter-spacing: 0.078px;">2</span>
<span class="t abs" style="left: 134.6px; top: 572.5px; font-size: 13px; line-height: 20px; color: rgb(51, 51, 51); letter-spacing: 0.075px;">75012</span>
<span class="t abs" style="left: 283.8px; top: 572.5px; font-size: 13px; line-height: 20px; color: rgb(51, 51, 51); letter-spacing: -0.068px;">Dorothy Wilk</span>
<span class="t abs" style="left: 507.8px; top: 572.5px; font-size: 13px; line-height: 20px; color: rgb(51, 51, 51); letter-spacing: 0.008px;">J882C2</span>
<span class="t abs" style="left: 620.8px; top: 572.5px; font-size: 13px; line-height: 20px; color: rgb(51, 51, 51); letter-spacing: 0.078px;">96</span>
<div class="abs" style="left:81px;top:600px;width:613px;height:31px;background:#f5f6f7"></div>
<div class="abs" style="left:81px;top:631px;width:613px;height:1px;background:#d6d8db"></div>
<span class="t abs" style="left: 96.4px; top: 604.5px; font-size: 13px; line-height: 20px; color: rgb(51, 51, 51); letter-spacing: 0.078px;">3</span>
<span class="t abs" style="left: 134.6px; top: 604.5px; font-size: 13px; line-height: 20px; color: rgb(51, 51, 51); letter-spacing: 0.075px;">17254</span>
<span class="t abs" style="left: 283.8px; top: 604.5px; font-size: 13px; line-height: 20px; color: rgb(51, 51, 51); letter-spacing: 0.165px;">Martin Johnson</span>
<span class="t abs" style="left: 507.8px; top: 604.5px; font-size: 13px; line-height: 20px; color: rgb(51, 51, 51); letter-spacing: 0.008px;">I72T39</span>
<span class="t abs" style="left: 620.8px; top: 604.5px; font-size: 13px; line-height: 20px; color: rgb(51, 51, 51); letter-spacing: 0.078px;">18</span>
<div class="abs" style="left:81px;top:632px;width:46px;height:31px;background:#f5f6f7"></div>
<div class="abs" style="left:81px;top:663px;width:613px;height:1px;background:#d6d8db"></div>
<span class="t abs" style="left: 96.4px; top: 636.5px; font-size: 13px; line-height: 20px; color: rgb(51, 51, 51); letter-spacing: 0.078px;">4</span>
<span class="t abs" style="left: 134.6px; top: 636.5px; font-size: 13px; line-height: 20px; color: rgb(51, 51, 51); letter-spacing: 0.075px;">12532</span>
<span class="t abs" style="left: 283.8px; top: 636.5px; font-size: 13px; line-height: 20px; color: rgb(51, 51, 51); letter-spacing: -0.073px;">Melvin Garcia</span>
<span class="t abs" style="left: 507.8px; top: 636.5px; font-size: 13px; line-height: 20px; color: rgb(51, 51, 51); letter-spacing: -0.122px;">PB6268</span>
<span class="t abs" style="left: 620.8px; top: 636.5px; font-size: 13px; line-height: 20px; color: rgb(51, 51, 51); letter-spacing: 0.078px;">68</span>
<div class="abs" style="left:81px;top:664px;width:613px;height:31px;background:#f5f6f7"></div>
<div class="abs" style="left:81px;top:695px;width:613px;height:1px;background:#d6d8db"></div>
<span class="t abs" style="left: 96.4px; top: 668.5px; font-size: 13px; line-height: 20px; color: rgb(51, 51, 51); letter-spacing: 0.078px;">5</span>
<span class="t abs" style="left: 134.6px; top: 668.5px; font-size: 13px; line-height: 20px; color: rgb(51, 51, 51); letter-spacing: 0.075px;">12532</span>
<span class="t abs" style="left: 283.8px; top: 668.5px; font-size: 13px; line-height: 20px; color: rgb(51, 51, 51); letter-spacing: -0.073px;">Melvin Garcia</span>
<span class="t abs" style="left: 507.8px; top: 668.5px; font-size: 13px; line-height: 20px; color: rgb(51, 51, 51); letter-spacing: -0.198px;">B8623C</span>
<span class="t abs" style="left: 620.8px; top: 668.5px; font-size: 13px; line-height: 20px; color: rgb(51, 51, 51); letter-spacing: 0.078px;">2507</span>
<div class="abs" style="left:81px;top:696px;width:46px;height:31px;background:#f5f6f7"></div>
<div class="abs" style="left:81px;top:727px;width:613px;height:1px;background:#d6d8db"></div>
<span class="t abs" style="left: 96.4px; top: 700.5px; font-size: 13px; line-height: 20px; color: rgb(51, 51, 51); letter-spacing: 0.078px;">6</span>
<span class="t abs" style="left: 134.6px; top: 700.5px; font-size: 13px; line-height: 20px; color: rgb(51, 51, 51); letter-spacing: 0.075px;">12532</span>
<span class="t abs" style="left: 283.8px; top: 700.5px; font-size: 13px; line-height: 20px; color: rgb(51, 51, 51); letter-spacing: -0.073px;">Melvin Garcia</span>
<span class="t abs" style="left: 507.8px; top: 700.5px; font-size: 13px; line-height: 20px; color: rgb(51, 51, 51); letter-spacing: -0.336px;">R9S838</span>
<span class="t abs" style="left: 620.8px; top: 700.5px; font-size: 13px; line-height: 20px; color: rgb(51, 51, 51); letter-spacing: 0.078px;">1278</span>
<div class="abs" style="left:81px;top:728px;width:613px;height:31px;background:#f5f6f7"></div>
<div class="abs" style="left:81px;top:759px;width:613px;height:1px;background:#d6d8db"></div>
<span class="t abs" style="left: 96.4px; top: 732.5px; font-size: 13px; line-height: 20px; color: rgb(51, 51, 51); letter-spacing: 0.078px;">7</span>
<span class="t abs" style="left: 134.6px; top: 732.5px; font-size: 13px; line-height: 20px; color: rgb(51, 51, 51); letter-spacing: 0.075px;">42632</span>
<span class="t abs" style="left: 283.8px; top: 732.5px; font-size: 13px; line-height: 20px; color: rgb(51, 51, 51); letter-spacing: -0.142px;">Raymond S. Vestal</span>
<span class="t abs" style="left: 507.8px; top: 732.5px; font-size: 13px; line-height: 20px; color: rgb(51, 51, 51); letter-spacing: -0.128px;">HS3124</span>
<span class="t abs" style="left: 620.8px; top: 732.5px; font-size: 13px; line-height: 20px; color: rgb(51, 51, 51); letter-spacing: 0.078px;">1944</span>
<div class="abs" style="left:81px;top:760px;width:46px;height:31px;background:#f5f6f7"></div>
<div class="abs" style="left:81px;top:791px;width:613px;height:1px;background:#d6d8db"></div>
<span class="t abs" style="left: 96.4px; top: 764.5px; font-size: 13px; line-height: 20px; color: rgb(51, 51, 51); letter-spacing: 0.078px;">8</span>
<span class="t abs" style="left: 134.6px; top: 764.5px; font-size: 13px; line-height: 20px; color: rgb(51, 51, 51); letter-spacing: 0.075px;">42632</span>
<span class="t abs" style="left: 283.8px; top: 764.5px; font-size: 13px; line-height: 20px; color: rgb(51, 51, 51); letter-spacing: -0.142px;">Raymond S. Vestal</span>
<span class="t abs" style="left: 507.8px; top: 764.5px; font-size: 13px; line-height: 20px; color: rgb(51, 51, 51); letter-spacing: -0.203px;">BS5902</span>
<span class="t abs" style="left: 620.8px; top: 764.5px; font-size: 13px; line-height: 20px; color: rgb(51, 51, 51); letter-spacing: 0.078px;">2798</span>
<div class="abs" style="left:81px;top:792px;width:613px;height:31px;background:#f5f6f7"></div>
<div class="abs" style="left:81px;top:823px;width:613px;height:1px;background:#d6d8db"></div>
<span class="t abs" style="left: 96.4px; top: 796.5px; font-size: 13px; line-height: 20px; color: rgb(51, 51, 51); letter-spacing: 0.078px;">9</span>
<span class="t abs" style="left: 134.6px; top: 796.5px; font-size: 13px; line-height: 20px; color: rgb(51, 51, 51); letter-spacing: 0.075px;">77913</span>
<span class="t abs" style="left: 283.8px; top: 796.5px; font-size: 13px; line-height: 20px; color: rgb(51, 51, 51); letter-spacing: -0.056px;">Betty J. Giambrone</span>
<span class="t abs" style="left: 507.8px; top: 796.5px; font-size: 13px; line-height: 20px; color: rgb(51, 51, 51); letter-spacing: -0.112px;">DN8815</span>
<span class="t abs" style="left: 620.8px; top: 796.5px; font-size: 13px; line-height: 20px; color: rgb(51, 51, 51); letter-spacing: 0.078px;">1320</span>
<div class="abs" style="left:81px;top:824px;width:46px;height:31px;background:#f5f6f7"></div>
<div class="abs" style="left:81px;top:855px;width:613px;height:1px;background:#d6d8db"></div>
<span class="t abs" style="left: 96.4px; top: 828.5px; font-size: 13px; line-height: 20px; color: rgb(51, 51, 51); letter-spacing: 0.078px;">10</span>
<span class="t abs" style="left: 134.6px; top: 828.5px; font-size: 13px; line-height: 20px; color: rgb(51, 51, 51); letter-spacing: 0.075px;">77913</span>
<span class="t abs" style="left: 283.8px; top: 828.5px; font-size: 13px; line-height: 20px; color: rgb(51, 51, 51); letter-spacing: -0.056px;">Betty J. Giambrone</span>
<span class="t abs" style="left: 507.8px; top: 828.5px; font-size: 13px; line-height: 20px; color: rgb(51, 51, 51); letter-spacing: -0.266px;">XR2771</span>
<span class="t abs" style="left: 620.8px; top: 828.5px; font-size: 13px; line-height: 20px; color: rgb(51, 51, 51); letter-spacing: 0.078px;">4315</span>
<svg style="left:48px;top:528px;width:13px;height:10px" viewBox="0 0 13 10" fill="#157bad"><rect x="0.0" y="0.0" width="3.6" height="2.6"></rect><rect x="4.6" y="0.0" width="3.6" height="2.6"></rect><rect x="9.2" y="0.0" width="3.6" height="2.6"></rect><rect x="0.0" y="3.6" width="3.6" height="2.6"></rect><rect x="4.6" y="3.6" width="3.6" height="2.6"></rect><rect x="9.2" y="3.6" width="3.6" height="2.6"></rect><rect x="0.0" y="7.2" width="3.6" height="2.6"></rect><rect x="4.6" y="7.2" width="3.6" height="2.6"></rect><rect x="9.2" y="7.2" width="3.6" height="2.6"></rect></svg>
<svg style="left:48px;top:555px;width:13px;height:11px" viewBox="0 0 13 11"><rect x="0.5" y="0.5" width="12" height="10" rx="1" fill="none" stroke="#c6ced5"></rect><path d="M3 8.8 V6.6 M5.3 8.8 V3.8 M7.6 8.8 V5.2 M9.9 8.8 V2.4" stroke="#c6ced5" stroke-width="1.3"></path></svg>
<svg style="left:66px;top:559px;width:8px;height:4px" viewBox="0 0 8 4" fill="#c6ced5"><path d="M0 0 H8 L4 4 Z"></path></svg>
<svg style="left:48px;top:582px;width:13px;height:10px" viewBox="0 0 13 10"><rect x="0.5" y="0.5" width="12" height="9" rx="0.8" fill="none" stroke="#c6ced5"></rect><path d="M6.5 0.5 V9.5" stroke="#c6ced5"></path><path d="M0.5 1.2 H12.5" stroke="#c6ced5" stroke-width="1.4"></path></svg>
<svg style="left:48px;top:608px;width:13px;height:12px" viewBox="0 0 13 12" fill="#c6ced5"><path d="M4.8 0 H8.2 V4 H10.8 L6.5 8.4 L2.2 4 H4.8 Z"></path><path d="M0 8.2 H3 L6.5 10.6 L10 8.2 H13 V12 H0 Z"></path></svg>
<!--MAIN1-->
</div>
<!-- ================= RIGHT ================= -->
<div id="rs">
<!--RS0-->
<svg style="left:10px;top:15px;width:18px;height:18px" viewBox="0 0 18 18" fill="none" stroke="#157bad"><circle cx="8.9" cy="8.9" r="7.5" stroke-width="2.3"></circle><path d="M6 8 L12 4.8 L12 10.2 L6 12.6 Z" fill="#157bad" stroke="none"></path><path d="M7.6 8.6 L10 9.6 L7.6 10.6 Z" fill="#fff" stroke="none"></path></svg>
<span class="abs" style="left:9.599999999999909px;top:49.5px;font-size:19px;line-height:22px;font-weight:bold;color:#68727a;font-family:'DejaVu Sans',sans-serif;transform:scaleX(0.82);transform-origin:0 0">x</span>
<span class="abs" style="left:22.40000000000009px;top:49.599999999999994px;font-size:11.5px;line-height:14px;font-weight:bold;color:#68727a;font-family:'DejaVu Sans',sans-serif;transform:scaleX(0.74);transform-origin:0 0">2</span>
<svg style="left:9px;top:89px;width:20px;height:18px" viewBox="0 0 20 18" fill="#68727a"><path d="M5.2 0.4 H19 Q19.6 0.4 19.4 1.2 L15.8 13 Q15.6 13.8 14.8 13.8 H3.4 Q1.6 14 2 15.4 Q2.4 16.4 3.6 16.4 H14.6 L15.4 17.2 H3.2 Q0 17 0.4 14 L4 1.6 Q4.4 0.4 5.2 0.4 Z"></path><path d="M7.6 3.6 H15.6 M7 5.8 H15" stroke="#fff" stroke-width="1.1"></path></svg>
<svg style="left:10px;top:125px;width:18px;height:20px" viewBox="0 0 18 20" fill="none" stroke="#68727a"><rect x="0.7" y="3" width="16.8" height="16.3" rx="1.2" fill="none" stroke-width="1.5"></rect><path d="M0.6 7.2 H17.6" stroke-width="1.8"></path><path d="M0.6 11.4 H17.6 M0.6 15.4 H17.6 M5 7 V19 M9.1 7 V19 M13.2 7 V19" stroke-width="0.9"></path><path d="M5 0.8 V5 M13.2 0.8 V5" stroke-width="2.4" stroke-linecap="round"></path></svg>
<!--RS1-->
</div>
<div id="ra">
<!--RA0-->
<span class="t abs" style="left: 13px; top: 9.5px; font-size: 15px; line-height: 20px; color: rgb(67, 77, 87); font-weight: bold; letter-spacing: -0.328px;">Tables</span>
<span class="t abs" style="right: 13.6px; top: 9.5px; font-size: 15px; line-height: 20px; color: rgb(138, 146, 153); letter-spacing: 0.192px;">Statement 3/3</span>
<div class="abs" style="left:10px;top:35.400000000000006px;width:232.6px;height:26px;border:1px solid #ccc;border-radius:2px"></div>
<span class="t abs" style="left: 15.8px; top: 38.5px; font-size: 15px; line-height: 20px; color: rgb(164, 169, 173); letter-spacing: -0.057px;">Filter...</span>
<svg style="left:16px;top:71.6px;width:6px;height:11px" viewBox="0 0 6 11" fill="#68727a"><rect x="1.4" y="0" width="2.8" height="2.4"></rect><path d="M0.2 4 H4.3 V8.8 H5.8 V10.6 H0.2 V8.8 H1.6 V5.8 H0.2 Z"></path></svg>
<span class="t abs" style="left: 31.4px; top: 67px; font-size: 14px; line-height: 20px; color: rgb(51, 51, 51); letter-spacing: 0.181px;">default.customers</span>
<span class="t abs" style="left: 35px; top: 86.5px; font-size: 13px; line-height: 20px; color: rgb(51, 51, 51); letter-spacing: 0.188px;">id</span>
<span class="t abs" style="right: 16.6px; top: 86.5px; font-size: 13px; line-height: 20px; color: rgb(154, 159, 164); letter-spacing: 0.286px;">int</span>
<span class="t abs" style="left: 35px; top: 106.5px; font-size: 13px; line-height: 20px; color: rgb(51, 51, 51); letter-spacing: 0.004px;">name</span>
<span class="t abs" style="right: 16.6px; top: 106.5px; font-size: 13px; line-height: 20px; color: rgb(154, 159, 164); letter-spacing: 0.203px;">string</span>
<span class="t abs" style="left: 35px; top: 127.5px; font-size: 13px; line-height: 20px; color: rgb(51, 51, 51); letter-spacing: -0.052px;">email_preferences</span>
<span class="t abs" style="right: 16.6px; top: 127.5px; font-size: 13px; line-height: 20px; color: rgb(154, 159, 164); letter-spacing: 0.299px;">struct</span>
<span class="t abs" style="left: 35px; top: 148.5px; font-size: 13px; line-height: 20px; color: rgb(51, 51, 51); letter-spacing: -0.005px;">addresses</span>
<span class="t abs" style="right: 16.6px; top: 148.5px; font-size: 13px; line-height: 20px; color: rgb(154, 159, 164); letter-spacing: 0.161px;">map</span>
<span class="t abs" style="left: 35px; top: 169.5px; font-size: 13px; line-height: 20px; color: rgb(51, 51, 51); letter-spacing: 0.031px;">orders</span>
<span class="t abs" style="right: 16.6px; top: 169.5px; font-size: 13px; line-height: 20px; color: rgb(154, 159, 164); letter-spacing: -0.172px;">array</span>
<!--RA1-->
</div>


</body></html>
